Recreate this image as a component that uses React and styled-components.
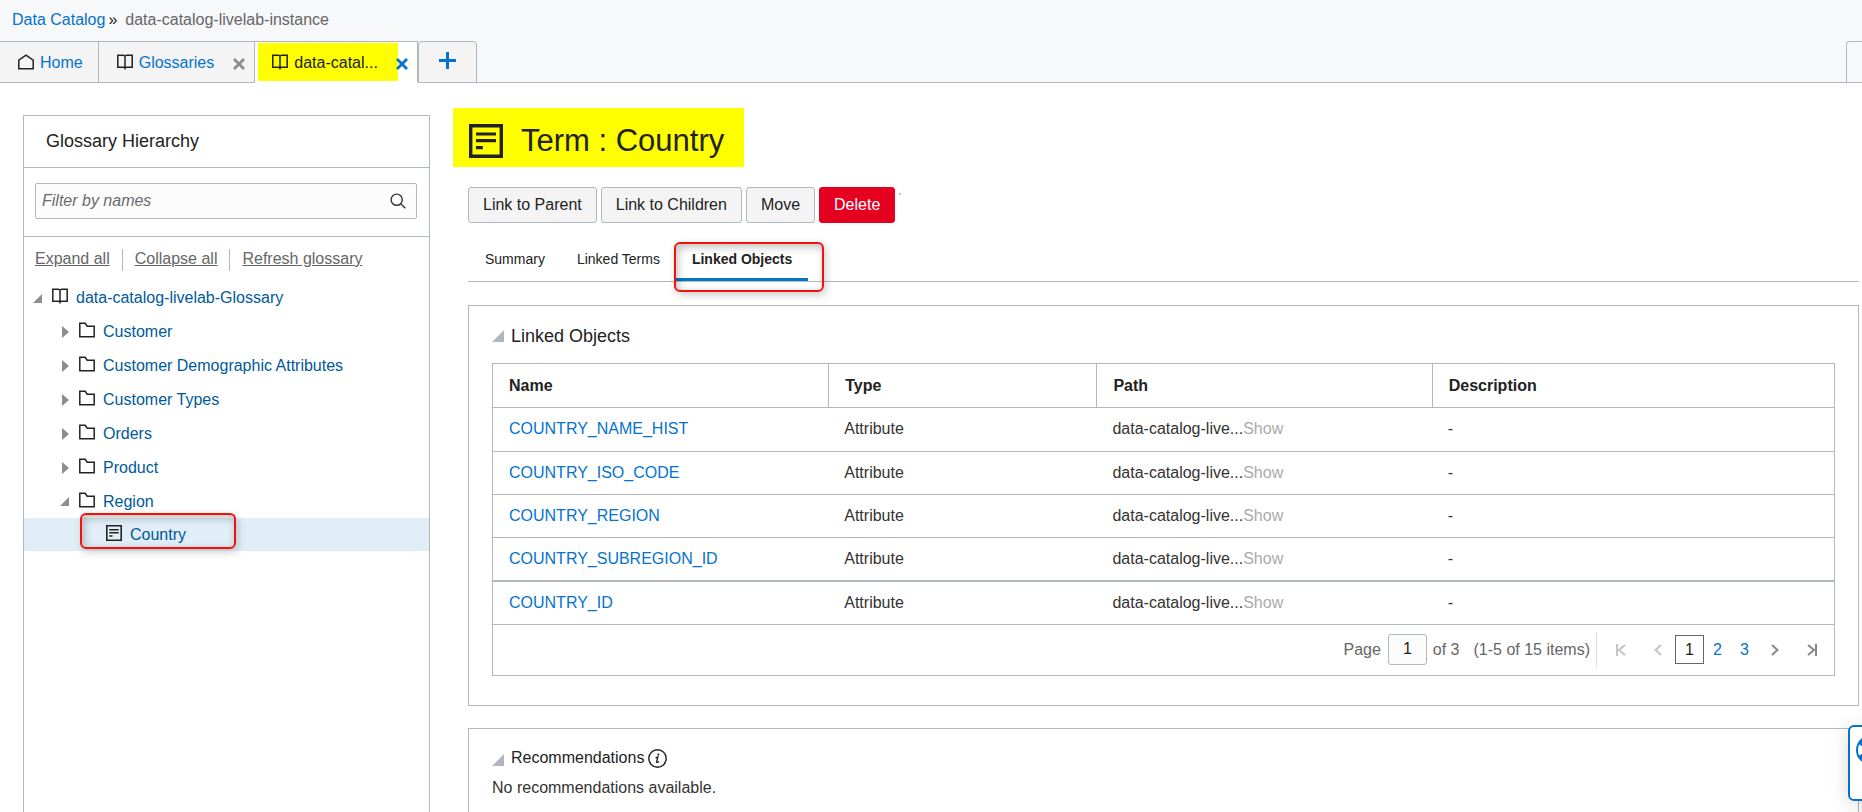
import React from "react";
import styled, { createGlobalStyle } from "styled-components";

const line = "#b1b7c1";
const link = "#0572ce";
const ink = "#222";
const muted = "#666";

const Global = createGlobalStyle`
  * { box-sizing: border-box; }
  body {
    margin: 0;
    background: #fff;
    color: ${ink};
    font: 16px/20px "Liberation Sans", Arial, sans-serif;
  }
  #root { height: 100vh; overflow: hidden; }
  svg { display: block; flex: none; }
  button, input { font: inherit; color: inherit; }
`;

const Page = styled.div`
  display: flex;
  flex-direction: column;
  height: 100%;
`;

const Header = styled.header`
  background: #f6f8fa;
`;

const Breadcrumb = styled.nav`
  display: flex;
  height: 41px;
  padding: 10px 12px 0;
  color: ${ink};
`;

const CrumbLink = styled.a`
  color: ${link};
  text-decoration: none;
`;

const CrumbSeparator = styled.span`
  padding: 0 8px 0 3px;
`;

const CrumbCurrent = styled.span`
  color: ${muted};
`;

const TabBar = styled.div`
  display: flex;
  height: 42px;
  box-shadow: inset 0 -1px ${line};
`;

const Tab = styled.div`
  display: flex;
  align-items: center;
  height: 42px;
  border-top: 1px solid ${line};
  border-right: 1px solid ${line};
  border-bottom: 1px solid ${(p) => (p.$active ? "#fff" : line)};
  background: ${(p) => (p.$active ? "#fff" : "#f4f4f4")};
  padding: ${(p) => (p.$active ? "0 9px 0 3px" : p.$closable ? "0 9px 0 18px" : "0 15px 0 18px")};
`;

const TabLabel = styled.a`
  display: flex;
  align-items: center;
  gap: 6px;
  height: ${(p) => (p.$marked ? "38px" : "40px")};
  width: ${(p) => (p.$marked ? "140px" : "auto")};
  padding-top: 2px;
  padding-left: ${(p) => (p.$marked ? "14px" : "0")};
  background: ${(p) => (p.$marked ? "#ff0" : "none")};
  color: ${(p) => (p.$marked ? ink : link)};
  text-decoration: none;

  svg { color: ${ink}; margin-bottom: 2px; }
`;

const TabClose = styled.button`
  border: 0;
  padding: 3px 0 0;
  background: none;
  margin-left: ${(p) => (p.$active ? "-2px" : "19px")};
  color: ${(p) => (p.$active ? "#0572ce" : "#8b8b8b")};
`;

const AddTab = styled.button`
  display: grid;
  place-items: center;
  width: 59px;
  border: 1px solid ${line};
  border-radius: 4px 4px 0 0;
  background: #f4f4f4;
  color: ${link};
  padding: 0 0 3px;
`;

const TabOverflow = styled.div`
  width: 16px;
  margin-left: auto;
  border: 1px solid ${line};
  border-right: 0;
  border-radius: 4px 0 0 0;
`;

const Content = styled.div`
  display: flex;
  align-items: stretch;
  flex: 1;
  min-height: 0;
`;

const Sidebar = styled.aside`
  flex: 0 0 407px;
  margin: 32px 0 0 23px;
  border: 1px solid ${line};
  border-bottom: 0;
`;

const SidebarTitle = styled.h2`
  margin: 0;
  height: 52px;
  padding: 0 22px;
  border-bottom: 1px solid ${line};
  font-size: 18px;
  font-weight: 400;
  line-height: 50px;
`;

const FilterArea = styled.div`
  padding: 15px 12px 17px 11px;
  border-bottom: 1px solid ${line};
`;

const FilterBox = styled.label`
  display: flex;
  align-items: center;
  height: 36px;
  padding: 0 10px 0 6px;
  border: 1px solid ${line};
  border-radius: 2px;
  background: #fcfcfc;
`;

const FilterInput = styled.input`
  flex: 1;
  min-width: 0;
  padding: 0 0 1px;
  border: 0;
  outline: 0;
  background: none;
  font-style: italic;

  &::placeholder { color: #6b6b6b; opacity: 1; }
`;

const TreeActions = styled.div`
  display: flex;
  height: 44px;
  padding: 12px 11px 0;
`;

const TreeAction = styled.a`
  height: 22px;
  color: ${muted};

  & + & {
    margin-left: 12px;
    padding-left: 12px;
    border-left: 1px solid ${line};
  }
`;

const Tree = styled.ul`
  margin: 0;
  padding: 0;
  list-style: none;
`;

const TreeRow = styled.li`
  display: flex;
  align-items: center;
  height: ${(p) => (p.$level === 1 ? "34px" : "33px")};
  padding-top: ${(p) => (p.$selected ? "0" : "1px")};
  padding-left: ${(p) => 9 + p.$level * 27}px;
  background: ${(p) => (p.$selected ? "#e1eef7" : "none")};
`;

const MarkerSlot = styled.span`
  display: flex;
  justify-content: flex-end;
  width: 9px;
`;

const TreeLabel = styled.a`
  display: flex;
  align-items: center;
  gap: 8px;
  margin-left: 10px;
  color: #00599c;
  text-decoration: none;

  svg { color: ${ink}; margin-bottom: 4px; }
`;

const Callout = styled.span`
  position: absolute;
  inset: ${(p) => p.$inset};
  border: 2px solid #f5100c;
  border-radius: 6px;
  box-shadow: 2px 3px 8px rgba(0, 0, 0, 0.2), inset 2px 3px 8px rgba(0, 0, 0, 0.25);
  pointer-events: none;
`;

const Anchor = styled.span`
  position: relative;
  display: block;
`;

const Main = styled.main`
  flex: 1;
  min-width: 0;
  padding: 25px 3px 0 38px;
`;

const TitleBar = styled.h1`
  display: flex;
  align-items: center;
  gap: 18px;
  width: fit-content;
  height: 59px;
  margin: 0 0 20px -15px;
  padding: 6px 20px 0 16px;
  background: #ff0;
  font-size: 31px;
  font-weight: 400;
  line-height: 36px;
`;

const Actions = styled.div`
  display: flex;
  gap: 4px;
`;

const ActionButton = styled.button`
  height: 36px;
  padding: 0 14px 1px;
  border: 1px solid ${(p) => (p.$danger ? "#e6001f" : line)};
  border-radius: 3px;
  background: ${(p) => (p.$danger ? "#e6001f" : "#f4f4f4")};
  color: ${(p) => (p.$danger ? "#fff" : ink)};
`;

const Dot = styled.span`
  width: 2px;
  height: 2px;
  margin-top: 6px;
  background: #c4c8ce;
`;

const SubTabs = styled.div`
  display: flex;
  height: 40px;
  margin: 19px 0 23px;
  padding-left: 1px;
  border-bottom: 1px solid ${line};
`;

const SubTab = styled.a`
  display: block;
  height: 39px;
  padding: 0 16px;
  border-bottom: ${(p) => (p.$active ? "3px solid #0079c4" : "0")};
  color: ${ink};
  font-size: 14px;
  font-weight: ${(p) => (p.$active ? 700 : 400)};
  line-height: 34px;
  text-decoration: none;
`;

const Panel = styled.section`
  margin-bottom: 22px;
  padding: 19px 23px 29px;
  border: 1px solid ${line};
`;

const PanelTitle = styled.h2`
  display: flex;
  align-items: center;
  gap: 7px;
  margin: 0;
  height: ${(p) => (p.$small ? "20px" : "22px")};
  font-size: ${(p) => (p.$small ? "16px" : "18px")};
  font-weight: 400;

  > svg { margin-top: ${(p) => (p.$small ? "4px" : "0")}; }
`;

const TitleText = styled.span`
  display: flex;
  align-items: center;
  gap: 4px;
`;

const TableFrame = styled.div`
  margin-top: 16px;
  border: 1px solid ${line};
`;

const Table = styled.table`
  width: 100%;
  table-layout: fixed;
  border-collapse: separate;
  border-spacing: 0;
`;

const HeadCell = styled.th`
  width: ${(p) => p.$width};
  height: 44px;
  padding: 0 16px;
  border-bottom: 1px solid ${line};
  text-align: left;

  & + & { border-left: 1px solid ${line}; }
`;

const Row = styled.tr`
  td { border-bottom: ${(p) => (p.$heavy ? "2px" : "1px")} solid ${line}; }
`;

const Cell = styled.td`
  height: ${(p) => (p.$tall ? "44px" : "43px")};
  padding: 0 16px 1px;
  color: #333;
`;

const ObjectLink = styled.a`
  color: ${link};
  text-decoration: none;
`;

const ShowLink = styled.a`
  color: #aaa;
  text-decoration: none;
`;

const Pager = styled.nav`
  display: flex;
  align-items: center;
  justify-content: flex-end;
  height: 50px;
  padding: 0 17px 1px 0;
  color: ${muted};
`;

const PageField = styled.label`
  display: flex;
  align-items: center;
  gap: 7px;
`;

const PageInput = styled.input`
  width: 39px;
  height: 31px;
  padding: 0 0 2px;
  border: 1px solid ${line};
  border-radius: 3px;
  background: #fcfcfc;
  color: ${ink};
  text-align: center;
`;

const PageInfo = styled.span`
  padding: 0 6px;

  & + & { padding-left: 8px; }
`;

const PagerSteps = styled.div`
  display: flex;
  align-items: center;
  height: 36px;
  padding-left: 19px;
  border-left: 1px solid #dfe1e4;
`;

const Step = styled.button`
  border: 0;
  padding: 0;
  background: none;
  color: #888;
  margin: ${(p) => p.$margin};

  &:disabled { color: #c4c4c4; }
`;

const PageNumber = styled.a`
  width: ${(p) => (p.$current ? "29px" : "27px")};
  height: 29px;
  border: 1px solid ${(p) => (p.$current ? "#666" : "transparent")};
  color: ${(p) => (p.$current ? ink : link)};
  line-height: 27px;
  text-align: center;
  text-decoration: none;
`;

const Note = styled.p`
  margin: 10px 0 0;
  color: #333;
`;

const HelpButton = styled.button`
  display: flex;
  align-items: flex-start;
  position: fixed;
  right: -46px;
  bottom: 11px;
  width: 60px;
  height: 76px;
  padding: 8px 6px;
  border: 2px solid ${link};
  border-radius: 6px;
  background: #fff;
  box-shadow: 0 4px 20px rgba(0, 0, 0, 0.15);
  color: ${link};
`;

const HomeIcon = () => (
  <svg width="16" height="16" viewBox="0 0 16 16" fill="none" stroke="currentColor" strokeWidth="1.5">
    <path d="M2.7 14.7H.8V6.2L8 1.2L15.2 6.2V14.7Z" />
  </svg>
);

const BookIcon = () => (
  <svg width="16" height="16" viewBox="0 0 16 16" fill="none" stroke="currentColor" strokeWidth="1.5">
    <path d="M.8 1.3H6.5L8 2.2L9.5 1.3H15.2V13.3H9.5L8 14L6.5 13.3H.8ZM8 2V15.5" />
  </svg>
);

const FolderIcon = () => (
  <svg width="16" height="16" viewBox="0 0 16 16" fill="none" stroke="currentColor" strokeWidth="1.5">
    <path d="M.8 1.3H6.2L8.2 4.2H15.2V14.8H.8Z" />
  </svg>
);

const TermIcon = ({ size }) => (
  <svg width={size} height={size} viewBox="0 0 16 16" fill="none" stroke="currentColor" strokeWidth="1.6">
    <path d="M.8.8H15.2V15.2H.8Z" />
    <path d="M3.3 4.7H12.7M3.3 7.8H12.7M3.3 11.1H6.5" strokeWidth="1.5" />
  </svg>
);

const CloseIcon = () => (
  <svg width="12" height="12" viewBox="0 0 12 12" fill="none" stroke="currentColor" strokeWidth="2.8">
    <path d="M1 1L11 11M11 1L1 11" />
  </svg>
);

const PlusIcon = () => (
  <svg width="17" height="17" viewBox="0 0 17 17" fill="none" stroke="currentColor" strokeWidth="3">
    <path d="M8.5 0V17M0 8.5H17" />
  </svg>
);

const SearchIcon = () => (
  <svg width="16" height="16" viewBox="0 0 16 16" fill="none" stroke="#333" strokeWidth="1.4">
    <circle cx="6.7" cy="6.7" r="5.6" />
    <path d="M10.7 10.7L15.3 15.3" />
  </svg>
);

const OpenMarker = ({ size, color }) => (
  <svg width={size} height={size} viewBox="0 0 12 12">
    <path d="M12 0V12H0Z" fill={color} />
  </svg>
);

const ClosedMarker = () => (
  <svg width="7" height="12" viewBox="0 0 7 12">
    <path d="M0 0L7 6L0 12Z" fill="#8b8d91" />
  </svg>
);

const InfoIcon = () => (
  <svg width="19" height="19" viewBox="0 0 19 19" fill="none" stroke={ink}>
    <circle cx="9.5" cy="9.5" r="8.7" strokeWidth="1.4" />
    <circle cx="10.3" cy="5.6" r="1.1" fill={ink} stroke="none" />
    <path d="M7.5 8.6L9.8 8L8.6 12.8Q8.6 14 11 12.6" strokeWidth="1.4" />
  </svg>
);

const ChevronIcon = ({ d, width }) => (
  <svg width={width} height="12" viewBox={`0 0 ${width} 12`} fill="none" stroke="currentColor" strokeWidth="2">
    <path d={d} />
  </svg>
);

const LifeRingIcon = () => (
  <svg width="30" height="30" viewBox="0 0 30 30" fill="none" stroke="currentColor">
    <circle cx="15" cy="15" r="14" strokeWidth="2" />
    <circle cx="15" cy="15" r="7" strokeWidth="2" />
    <path d="M4 7L10 11M4 23L10 19M26 7L20 11M26 23L20 19" strokeWidth="5" />
  </svg>
);

const folders = [
  { name: "Customer" },
  { name: "Customer Demographic Attributes" },
  { name: "Customer Types" },
  { name: "Orders" },
  { name: "Product" },
  { name: "Region", open: true },
];

const objects = [
  "COUNTRY_NAME_HIST",
  "COUNTRY_ISO_CODE",
  "COUNTRY_REGION",
  "COUNTRY_SUBREGION_ID",
  "COUNTRY_ID",
];

function GlossarySidebar() {
  return (
    <Sidebar>
      <SidebarTitle>Glossary Hierarchy</SidebarTitle>
      <FilterArea>
        <FilterBox>
          <FilterInput type="text" aria-label="Filter by names" placeholder="Filter by names" />
          <SearchIcon />
        </FilterBox>
      </FilterArea>
      <TreeActions>
        <TreeAction href="#expand">Expand all</TreeAction>
        <TreeAction href="#collapse">Collapse all</TreeAction>
        <TreeAction href="#refresh">Refresh glossary</TreeAction>
      </TreeActions>
      <Tree>
        <TreeRow $level={0}>
          <MarkerSlot>
            <OpenMarker size={9} color="#8b8d91" />
          </MarkerSlot>
          <TreeLabel href="#glossary">
            <BookIcon />
            data-catalog-livelab-Glossary
          </TreeLabel>
        </TreeRow>
        {folders.map((folder) => (
          <TreeRow key={folder.name} $level={1}>
            <MarkerSlot>
              {folder.open ? <OpenMarker size={9} color="#8b8d91" /> : <ClosedMarker />}
            </MarkerSlot>
            <TreeLabel href="#folder">
              <FolderIcon />
              {folder.name}
            </TreeLabel>
          </TreeRow>
        ))}
        <TreeRow $level={2} $selected>
          <MarkerSlot />
          <Anchor>
            <TreeLabel href="#country">
              <TermIcon size={16} />
              Country
            </TreeLabel>
            <Callout $inset="-12px -50px -4px -16px" />
          </Anchor>
        </TreeRow>
      </Tree>
    </Sidebar>
  );
}

function ObjectsTable() {
  return (
    <TableFrame>
      <Table>
        <thead>
          <tr>
            <HeadCell $width="25%">Name</HeadCell>
            <HeadCell $width="20%">Type</HeadCell>
            <HeadCell $width="25%">Path</HeadCell>
            <HeadCell $width="30%">Description</HeadCell>
          </tr>
        </thead>
        <tbody>
          {objects.map((name, i) => (
            <Row key={name} $heavy={i === 3}>
              <Cell $tall={i === 0 || i === 3}>
                <ObjectLink href="#object">{name}</ObjectLink>
              </Cell>
              <Cell>Attribute</Cell>
              <Cell>
                data-catalog-live...<ShowLink href="#show">Show</ShowLink>
              </Cell>
              <Cell>-</Cell>
            </Row>
          ))}
        </tbody>
      </Table>
      <Pager aria-label="Pages">
        <PageField>
          Page
          <PageInput type="text" defaultValue="1" />
        </PageField>
        <PageInfo>of 3</PageInfo>
        <PageInfo>(1-5 of 15 items)</PageInfo>
        <PagerSteps>
          <Step disabled aria-label="First page" $margin="0 27px 0 0">
            <ChevronIcon width={11} d="M1 0V12M9 1L3 6L9 11" />
          </Step>
          <Step disabled aria-label="Previous page" $margin="0 13px 0 0">
            <ChevronIcon width={8} d="M7 1L1.5 6L7 11" />
          </Step>
          <PageNumber href="#1" $current>1</PageNumber>
          <PageNumber href="#2">2</PageNumber>
          <PageNumber href="#3">3</PageNumber>
          <Step aria-label="Next page" $margin="0 27px 0 13px">
            <ChevronIcon width={8} d="M1 1L6.5 6L1 11" />
          </Step>
          <Step aria-label="Last page" $margin="0">
            <ChevronIcon width={11} d="M10 0V12M2 1L8 6L2 11" />
          </Step>
        </PagerSteps>
      </Pager>
    </TableFrame>
  );
}

export default function App() {
  return (
    <Page>
      <Global />
      <Header>
        <Breadcrumb>
          <CrumbLink href="#catalog">Data Catalog</CrumbLink>
          <CrumbSeparator>»</CrumbSeparator>
          <CrumbCurrent>data-catalog-livelab-instance</CrumbCurrent>
        </Breadcrumb>
        <TabBar>
          <Tab>
            <TabLabel href="#home">
              <HomeIcon />
              Home
            </TabLabel>
          </Tab>
          <Tab $closable>
            <TabLabel href="#glossaries">
              <BookIcon />
              Glossaries
            </TabLabel>
            <TabClose aria-label="Close Glossaries">
              <CloseIcon />
            </TabClose>
          </Tab>
          <Tab $active>
            <TabLabel href="#term" $marked>
              <BookIcon />
              data-catal...
            </TabLabel>
            <TabClose aria-label="Close data-catal..." $active>
              <CloseIcon />
            </TabClose>
          </Tab>
          <AddTab aria-label="New tab">
            <PlusIcon />
          </AddTab>
          <TabOverflow />
        </TabBar>
      </Header>
      <Content>
        <GlossarySidebar />
        <Main>
          <TitleBar>
            <TermIcon size={34} />
            Term : Country
          </TitleBar>
          <Actions>
            <ActionButton>Link to Parent</ActionButton>
            <ActionButton>Link to Children</ActionButton>
            <ActionButton>Move</ActionButton>
            <ActionButton $danger>Delete</ActionButton>
            <Dot />
          </Actions>
          <SubTabs>
            <SubTab href="#summary">Summary</SubTab>
            <SubTab href="#terms">Linked Terms</SubTab>
            <Anchor>
              <SubTab href="#objects" $active>Linked Objects</SubTab>
              <Callout $inset="0 -16px -11px -2px" />
            </Anchor>
          </SubTabs>
          <Panel>
            <PanelTitle>
              <OpenMarker size={12} color={line} />
              <TitleText>Linked Objects</TitleText>
            </PanelTitle>
            <ObjectsTable />
          </Panel>
          <Panel>
            <PanelTitle $small>
              <OpenMarker size={12} color={line} />
              <TitleText>
                Recommendations
                <InfoIcon />
              </TitleText>
            </PanelTitle>
            <Note>No recommendations available.</Note>
          </Panel>
        </Main>
      </Content>
      <HelpButton aria-label="Help">
        <LifeRingIcon />
      </HelpButton>
    </Page>
  );
}
